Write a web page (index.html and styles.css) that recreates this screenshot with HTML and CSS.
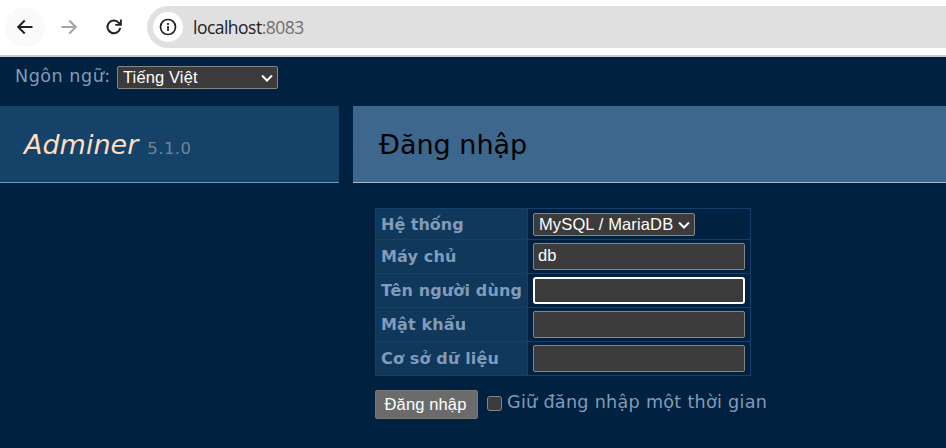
FILE: index.html
```html
<!DOCTYPE html>
<html lang="vi">
<head>
<meta charset="utf-8">
<title>Đăng nhập - Adminer</title>
<link rel="stylesheet" href="styles.css">
</head>
<body>
<header class="toolbar">
  <span class="nav back"><svg width="18" height="18" viewBox="0 0 18 18"><path d="M16.500 9H2.500M8.700 2.500L2.200 9l6.500 6.500"/></svg></span>
  <span class="nav forward"><svg width="18" height="18" viewBox="0 0 18 18"><path d="M1.500 9H15.500M9.300 2.500L15.800 9l-6.500 6.500"/></svg></span>
  <span class="nav reload"><svg width="18" height="18" viewBox="0 0 18 18"><path d="M15.200 9.800A6.400 6.400 0 1 1 13.800 4.800L15.300 6.300"/><path class="tip" d="M16.800 1.500V7.800H10.300V6H13.500L15 4.500V1.500z"/></svg></span>
  <div class="address">
    <span class="info"><svg width="18" height="18" viewBox="0 0 18 18"><circle cx="9" cy="9" r="7.500"/><path d="M9 8v5M9 5v1.900"/></svg></span>
    <span class="url">localhost<span class="port">:8083</span></span>
  </div>
</header>
<div class="language">
  <label for="lang">Ngôn ngữ:</label>
  <span class="select lang-select"><select id="lang"><option>Tiếng Việt</option></select><svg width="12" height="8" viewBox="0 0 12 8"><path d="M1 1.500l5 5 5-5"/></svg></span>
</div>
<div class="headings">
  <h1><span class="brand">Adminer</span><span class="version">5.1.0</span></h1>
  <h2><span>Đăng nhập</span></h2>
</div>
<form class="login">
  <div class="fields">
    <label class="th first">Hệ thống</label>
    <div class="td first"><span class="select driver-select"><select><option>MySQL / MariaDB</option></select><svg width="12" height="8" viewBox="0 0 12 8"><path d="M1 1.500l5 5 5-5"/></svg></span></div>
    <label class="th">Máy chủ</label>
    <div class="td"><input type="text" value="db"></div>
    <label class="th">Tên người dùng</label>
    <div class="td"><input type="text" class="active"></div>
    <label class="th">Mật khẩu</label>
    <div class="td"><input type="password"></div>
    <label class="th">Cơ sở dữ liệu</label>
    <div class="td"><input type="text"></div>
  </div>
  <div class="actions">
    <button type="button">Đăng nhập</button>
    <label class="keep"><input type="checkbox"><span>Giữ đăng nhập một thời gian</span></label>
  </div>
</form>
</body>
</html>
```
FILE: styles.css
```css
* { box-sizing: border-box; }
body {
  margin: 0;
  height: 448px;
  overflow: hidden;
  background: #00213f;
  color: #819bba;
  font: 17.6px/22px Verdana, "DejaVu Sans", sans-serif;
}
svg { display: block; fill: none; stroke: currentColor; stroke-width: 2; }
.toolbar {
  display: flex;
  align-items: center;
  height: 57px;
  padding: 0 0 2px 5px;
  border-bottom: 2px solid #c5cad0;
  background: #fff;
  color: #202124;
}
.nav {
  display: flex;
  align-items: center;
  justify-content: center;
  width: 40px;
  height: 40px;
  margin-right: 5px;
  border-radius: 50%;
}
.back { margin-right: 4px; background: #fafafa; }
.forward { color: #a5a5a5; }
.reload { margin-right: 13px; }
.reload .tip { fill: currentColor; stroke: none; }
.address {
  display: flex;
  align-items: center;
  flex: 1;
  height: 42px;
  padding-left: 6px;
  border-radius: 21px 0 0 21px;
  background: #e0e0e0;
}
.info {
  display: flex;
  align-items: center;
  justify-content: center;
  width: 30px;
  height: 30px;
  border-radius: 50%;
  background: #fff;
}
.info svg { stroke-width: 1.7; }
.url { margin-left: 10px; font: 17.5px/24px "Open Sans", sans-serif; letter-spacing: -.52px; }
.port { color: #707070; }
.language { display: flex; height: 49px; padding: 9px 0 0 15px; }
.language label { width: 102px; line-height: 21px; letter-spacing: .5px; white-space: nowrap; }
.select { position: relative; display: block; height: 23px; color: #fff; }
.select select {
  appearance: none;
  display: block;
  width: 100%;
  height: 100%;
  margin: 0;
  padding: 0 5px;
  border: 1px solid #858585;
  border-radius: 2px;
  background: #3b3b3b;
  color: #fff;
  font: 16.5px/21px "Liberation Sans", sans-serif;
  letter-spacing: .13px;
}
.select svg { position: absolute; right: 5px; top: 8px; }
.lang-select { width: 161px; }
.driver-select { width: 162px; }
.headings { display: grid; grid-template-columns: 339px 1fr; grid-template-rows: 77px; gap: 14px; height: 77px; }
h1, h2 { margin: 0; font-weight: 400; font-size: 27px; line-height: 78px; white-space: nowrap; }
h1 { padding-left: 24px; border-bottom: 1px solid #6d9bc5; background: #154269; }
h2 { padding-left: 26px; border-bottom: 1px solid #a3bdd7; background: #3e678d; color: #000; }
.brand { color: #ffddbf; font-style: italic; }
.version { margin-left: 9px; color: #748391; font-size: 16.5px; letter-spacing: .45px; }
.login { padding: 25px 0 0 375px; }
.fields {
  display: grid;
  grid-template-columns: 151px 222px;
  grid-template-rows: 30px repeat(4, 33px);
  gap: 1px;
  width: 376px;
  padding: 1px;
  background: #154069;
}
.th { padding-left: 5px; background: #10385b; font-size: 16px; font-weight: 700; line-height: 33px; letter-spacing: .15px; white-space: nowrap; }
.th.first { line-height: 31px; letter-spacing: 0; }
.td { padding: 3px 5px; background: #00213f; }
.td.first { padding-top: 4px; }
.td input {
  display: block;
  width: 212px;
  height: 27px;
  margin: 0;
  padding: 0 4px 2px;
  border: 1px solid #858585;
  border-radius: 2px;
  background: #3b3b3b;
  color: #fff;
  font: 16.5px "Liberation Sans", sans-serif;
}
.td input.active { border: 2px solid #fff; border-radius: 3px; }
.actions { display: flex; padding-top: 14px; }
button {
  width: 103px;
  height: 29px;
  margin: 0;
  padding: 0 2px 1px 0;
  border: 1px solid #777;
  border-radius: 2px;
  background: #6b6b6b;
  color: #fff;
  font: 16.5px "Liberation Sans", sans-serif;
  letter-spacing: .13px;
  white-space: nowrap;
}
.keep { display: flex; padding-left: 9px; white-space: nowrap; }
.keep input {
  appearance: none;
  width: 15px;
  height: 15px;
  margin: 6px 5px 0 0;
  border: 1px solid #858585;
  border-radius: 3px;
  background: #3b3b3b;
}
.keep span { line-height: 24px; letter-spacing: .28px; }
```
